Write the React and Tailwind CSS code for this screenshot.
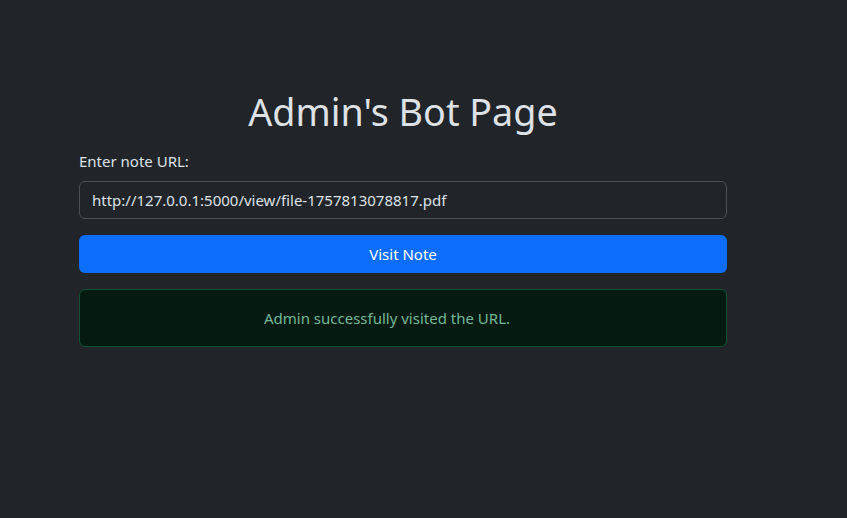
import React, { useState } from "react";

const FONT = { fontFamily: '"Noto Sans", "Open Sans", sans-serif' };

export default function App() {
  const [url, setUrl] = useState("http://127.0.0.1:5000/view/file-1757813078817.pdf");

  return (
    <div className="min-h-[518px] w-full bg-[#212529] text-[#dee2e6]" style={FONT}>
      <div className="ml-[79px] w-[648px] pt-[88px]">
        {/* Heading */}
        <h1 className="text-center text-[37.7px] leading-[48px] font-normal mb-[13px]">Admin's Bot Page</h1>

        {/* Form */}
        <form onSubmit={e => e.preventDefault()}>
          <label className="block text-[15px] leading-6 mb-2">Enter note URL:</label>
          <input
            value={url}
            onChange={e => setUrl(e.target.value)}
            className="block w-full h-[38px] px-3 rounded-md border border-[#495057] bg-[#212529] text-[15px] text-[#dee2e6] outline-none mb-4"
          />
          <button
            type="submit"
            className="block w-full h-[38px] rounded-md bg-[#0d6efd] text-white text-[15px] mb-4"
          >
            Visit Note
          </button>
        </form>

        {/* Result */}
        <div className="rounded-md border border-[#0f5132] bg-[#051b11] text-[#75b798] pl-4 pr-12 py-4 text-center text-[15px] leading-6">
          Admin successfully visited the URL.
        </div>
      </div>
    </div>
  );
}
